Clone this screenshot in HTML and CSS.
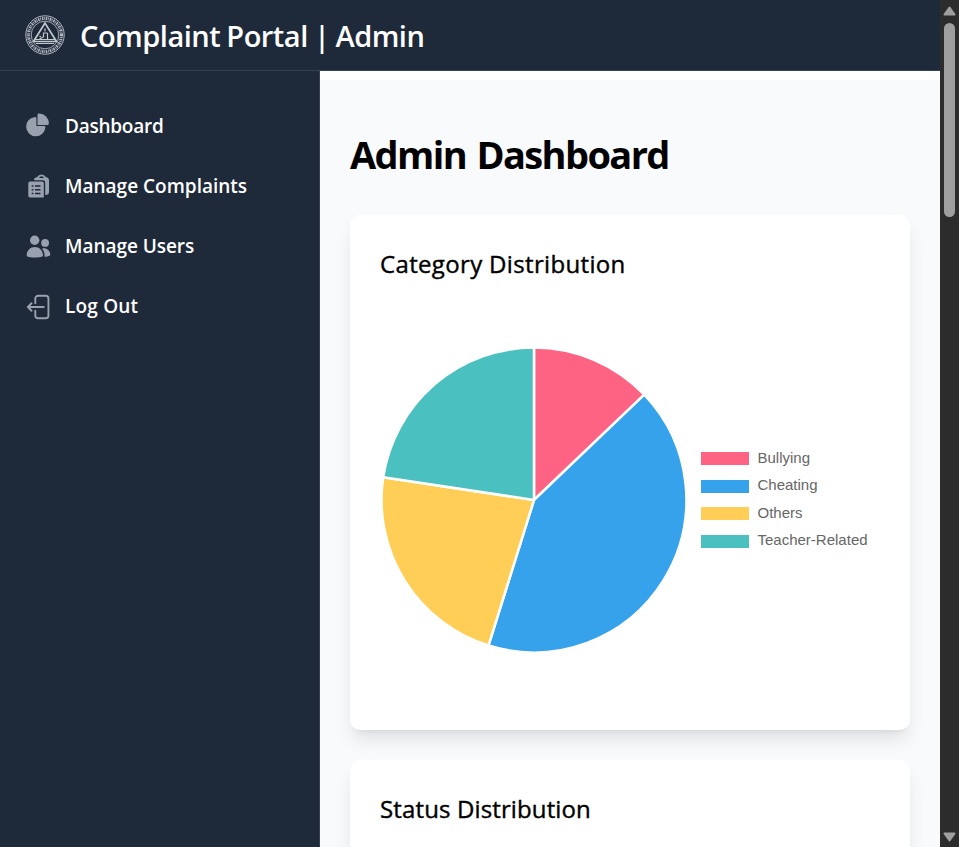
FILE: index.html
```html
<!DOCTYPE html>
<html lang="en">
<head>
<meta charset="utf-8">
<title>Complaint Portal | Admin</title>
<link rel="stylesheet" href="styles.css">
</head>
<body>
<div class="viewport">
  <div class="app">
    <header class="topbar">
      <svg class="seal" viewBox="0 0 40 40" fill="none" stroke="#c3c8cf">
        <circle cx="20" cy="20" r="19.200" stroke-width=".9"/>
        <circle cx="20" cy="20" r="16.500" stroke-width="3.200" stroke-dasharray="1.500 .7 .8 .9" opacity=".9"/>
        <circle cx="20" cy="20" r="13.800" stroke-width=".8"/>
        <path d="M20 8 8.500 26.500h23Z" stroke-width="1.700"/>
        <path d="M20 13.500v3M18 18h4.500M18.500 18v4l-4 2M22.500 18v6M16 22l-1.500-1M9 24.500h22M11 28.500h18" stroke-width="1.200"/>
      </svg>
      <span class="brand">Complaint Portal | Admin</span>
    </header>
    <div class="body">
      <nav class="sidebar">
        <a class="item"><svg class="icon pie-icon" viewBox="0 0 22 21"><path d="M16.975 11H10V4.025a1 1 0 0 0-1.066-.998 8.500 8.500 0 1 0 9.039 9.039.999.999 0 0 0-1-1.066h.002Z"/><path d="M12.500 0c-.157 0-.311.01-.565.027A1 1 0 0 0 11 1.020V10h8.975a1 1 0 0 0 1-.935c.013-.188.028-.374.028-.565A8.510 8.510 0 0 0 12.500 0Z"/></svg><span class="l1">Dashboard</span></a>
        <a class="item"><svg class="icon raised" viewBox="0 0 25 25"><path fill-rule="evenodd" d="M5 8.500H17q1.800 0 1.800 1.800V24.500H5q-1.700 0-1.700-1.700V10.200q0-1.700 1.700-1.700ZM6.700 12.300v1.500h1.700v-1.500Zm3.300 0v1.500h5.500v-1.500ZM6.700 16v1.500h1.700V16Zm3.300 0v1.500h5.500V16ZM6.700 19.700v1.500h1.700v-1.500Zm3.300 0v1.500h5.500v-1.500Z"/><path fill-rule="evenodd" d="M9 7.200Q9.200 4.200 12 4.200 13.500 1.500 16.500 1.500T21 4.200Q24 4.500 24 7.500V19Q24 22 20.200 22V9.500Q20.200 7.200 18 7.200ZM14 5H19Q18.500 3.200 16.500 3.200T14 5Z"/></svg><span class="l2">Manage Complaints</span></a>
        <a class="item"><svg class="icon raised" viewBox="0 0 25 25"><circle cx="9.700" cy="7.200" r="4.700"/><circle cx="20.100" cy="9.900" r="3.900"/><path d="M1.700 22C1.900 17.500 5.300 14 9.800 14S17.700 17.500 18 22Q18 23.100 17.200 23.500C14.500 24.900 5.200 24.900 2.500 23.500Q1.700 23.100 1.700 22ZM17 15.700C20.500 14 24.800 17 25.300 21.200Q25.400 22.200 24.500 22.700 22.400 23.800 19.400 23.600C19.800 20.500 19.300 18.200 17 15.700Z"/></svg><span class="l3">Manage Users</span></a>
        <a class="item"><svg class="icon exit-icon" viewBox="0 0 24 24"><path d="M8.250 9V5.250A2.250 2.250 0 0 1 10.500 3h6a2.250 2.250 0 0 1 2.250 2.250v13.500A2.250 2.250 0 0 1 16.500 21h-6a2.250 2.250 0 0 1-2.250-2.250V15m-3 0-3-3m0 0 3-3m-3 3H15"/></svg><span class="l4">Log Out</span></a>
      </nav>
      <main class="content">
        <div class="panel">
          <h1>Admin Dashboard</h1>
          <section class="card">
            <h2 class="c1">Category Distribution</h2>
            <div class="chart">
              <svg class="pie" viewBox="-153 -153 306 306" stroke="#fff" stroke-width="2.500" stroke-linejoin="bevel">
                <path fill="#ff6384" d="M0 0V-152.500A152.500 152.500 0 0 1 110.300-105.300Z"/>
                <path fill="#36a2eb" d="M0 0 110.300-105.300A152.500 152.500 0 0 1-45.500 145.500Z"/>
                <path fill="#ffce56" d="M0 0-45.500 145.500A152.500 152.500 0 0 1-150.800-22.700Z"/>
                <path fill="#4bc0c0" d="M0 0-150.800-22.700A152.500 152.500 0 0 1 0-152.500Z"/>
              </svg>
              <ul class="legend">
                <li><i class="red"></i><span>Bullying</span></li>
                <li><i class="blue"></i><span>Cheating</span></li>
                <li><i class="yellow"></i><span>Others</span></li>
                <li><i class="teal"></i><span>Teacher-Related</span></li>
              </ul>
            </div>
          </section>
          <section class="card">
            <h2 class="c2">Status Distribution</h2>
          </section>
        </div>
      </main>
    </div>
  </div>
  <div class="scrollbar">
    <svg class="arrow" viewBox="0 0 13 10"><path d="M6.500 1.500 11.500 8.500h-10Z"/></svg>
    <div class="thumb"></div>
    <svg class="arrow down" viewBox="0 0 13 10"><path d="M6.500 8.500 11.500 1.500h-10Z"/></svg>
  </div>
</div>
</body>
</html>
```
FILE: styles.css
```css
* { box-sizing: border-box; }
body, h1, h2, ul { margin: 0; padding: 0; }
body { overflow: hidden; background: #fff; font-family: "Open Sans", sans-serif; }
.viewport { display: flex; height: 847px; overflow: hidden; }
.app { flex: 1; display: flex; flex-direction: column; min-width: 0; }
.topbar { flex: none; height: 71px; display: flex; align-items: center; gap: 15px; padding: 0 25px; background: #1e2939; border-bottom: 1px solid #364153; color: #fff; }
.seal { width: 40px; height: 40px; }
.brand { padding-top: 2px; font-size: 29px; font-weight: 600; line-height: 40px; letter-spacing: -.5px; word-spacing: -.9px; white-space: nowrap; }
.body { flex: 1; display: flex; min-height: 0; }
.sidebar { width: 320px; flex: none; display: flex; flex-direction: column; gap: 10px; padding: 30px 15px; background: #1e2939; border-right: 1px solid #364153; }
.item { height: 50px; display: flex; align-items: center; padding: 0 10px; gap: 15px; color: #fff; font-size: 19px; font-weight: 600; line-height: 26px; white-space: nowrap; }
.l1 { letter-spacing: -.25px; }
.l3 { letter-spacing: -.05px; }
.l4 { letter-spacing: .2px; }
.icon { width: 25px; height: 25px; flex: none; fill: #99a1af; overflow: visible; }
.pie-icon { margin-bottom: 2px; }
.raised { margin-bottom: 1px; }
.exit-icon { width: 30px; height: 30px; margin: 2px -5px 0 0; fill: none; stroke: #99a1af; stroke-width: 1.5; stroke-linecap: round; stroke-linejoin: round; }
.content { flex: 1; min-width: 0; padding-top: 9px; }
.panel { background: #f8fafc; padding: 50px 30px 0; height: 100%; overflow: hidden; }
h1 { height: 85px; line-height: 48px; font-size: 38px; font-weight: 700; letter-spacing: -1.6px; word-spacing: 2px; white-space: nowrap; }
.card { height: 515px; margin-bottom: 30px; padding: 30px; background: #fff; border-radius: 10px; box-shadow: 0 12.5px 18.75px -3.75px rgba(0,0,0,.1), 0 5px 7.5px -5px rgba(0,0,0,.1); }
h2 { height: 40px; font-size: 24px; font-weight: 500; line-height: 38px; white-space: nowrap; -webkit-text-stroke: .4px #000; }
.c1 { letter-spacing: .34px; }
.c2 { letter-spacing: .13px; }
.chart { height: 430px; display: flex; align-items: center; gap: 14px; padding-left: 1px; }
.pie { width: 306px; height: 306px; flex: none; }
.legend { list-style: none; font: 15px/27.5px "Liberation Sans", sans-serif; color: #666; }
.legend li { display: flex; align-items: center; gap: 8.5px; height: 27.5px; }
.legend span { padding-bottom: 2.9px; }
.legend i { width: 48px; height: 13px; }
.red { background: #ff6384; }
.blue { background: #36a2eb; }
.yellow { background: #ffce56; }
.teal { background: #4bc0c0; }
.scrollbar { width: 19px; flex: none; display: flex; flex-direction: column; align-items: center; padding: 6px 0 5px; background: #2c2c2c; }
.arrow { width: 13px; height: 10px; flex: none; fill: #9f9f9f; stroke: #9f9f9f; stroke-width: 2; stroke-linejoin: round; }
.thumb { width: 11px; height: 194px; margin-top: 7px; border-radius: 6px; background: #9f9f9f; }
.down { margin-top: auto; }
```
